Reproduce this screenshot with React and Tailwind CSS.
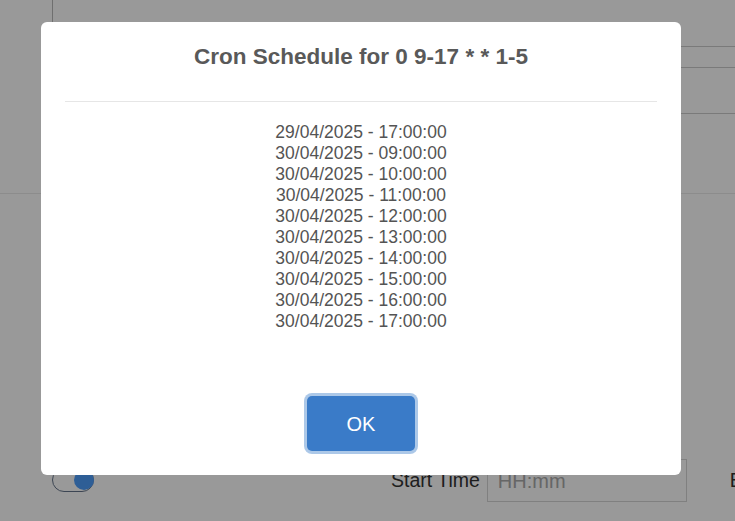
import React from "react";

const times = [
  "29/04/2025 - 17:00:00",
  "30/04/2025 - 09:00:00",
  "30/04/2025 - 10:00:00",
  "30/04/2025 - 11:00:00",
  "30/04/2025 - 12:00:00",
  "30/04/2025 - 13:00:00",
  "30/04/2025 - 14:00:00",
  "30/04/2025 - 15:00:00",
  "30/04/2025 - 16:00:00",
  "30/04/2025 - 17:00:00",
];

export default function App() {
  return (
    <div className="relative w-[735px] h-[521px] overflow-hidden bg-white font-['Liberation_Sans',Arial,sans-serif]">
      {/* Background page */}
      <div className="flex flex-col h-full">
        <div className="flex h-[194px] shrink-0 border-b border-[#e9e9e9]">
          <div className="ml-[52px] w-[629px] shrink-0 border-l border-[#b9b9b9]"></div>
          <div className="flex-1 flex flex-col">
            <div className="h-[46px]"></div>
            <div className="h-[22px] border-t border-b border-[#cbcbcb]"></div>
            <div className="h-[46px] border-b border-[#cbcbcb]"></div>
          </div>
        </div>
        <div className="flex items-start pt-[265px] w-max">
          <div className="ml-[52px] mt-[9px] shrink-0 relative w-[42px] h-[24px] rounded-full border-[1.5px] border-[#65748a] bg-white">
            <div className="absolute right-[-1px] top-[0.5px] w-[20px] h-[20px] rounded-full bg-[#4d9dfb]"></div>
          </div>
          <div className="ml-[297px] mt-[9px] shrink-0 whitespace-nowrap text-[19.5px] leading-[24px] text-[#333]">Start Time</div>
          <div className="ml-[7px] shrink-0 w-[200px] h-[43px] border border-[#d5d5d5] flex items-center px-[10px] text-[20px] text-[#aaaaaa]">
            HH:mm
          </div>
          <div className="ml-[43px] mt-[9px] shrink-0 text-[19.5px] leading-[24px] text-[#333] whitespace-nowrap">End Time</div>
        </div>
      </div>

      {/* Overlay */}
      <div className="absolute inset-0 bg-black/40 flex items-start pl-[41px] pt-[22px]">
        <div className="w-[640px] h-[453px] bg-white rounded-[6px] flex flex-col items-center">
          <h2 className="mt-[21px] text-[22.5px] leading-[27px] font-bold text-[#595959] whitespace-nowrap">
            Cron Schedule for 0 9-17 * * 1-5
          </h2>
          <div className="mt-[31px] w-[592px] h-px bg-[#e6e6e6]"></div>
          <div className="mt-[20px] flex flex-col items-center text-[17.5px] leading-[21px] text-[#545454]">
            {times.map((t, i) => (
              <div key={i}>{t}</div>
            ))}
          </div>
          <button className="mt-[64px] w-[108px] h-[55px] rounded-[5px] bg-[#3a7bc8] text-white text-[20px] shadow-[0_0_0_3px_rgba(58,123,200,0.42)]">
            OK
          </button>
        </div>
      </div>
    </div>
  );
}
